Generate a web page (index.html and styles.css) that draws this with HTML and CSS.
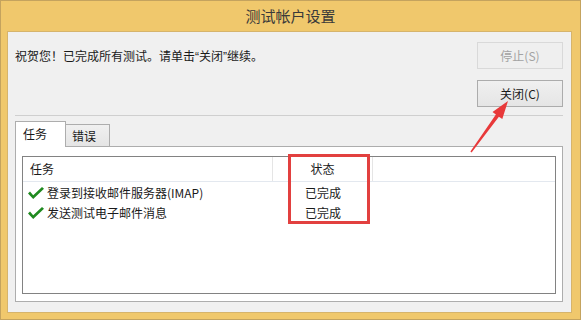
FILE: index.html
```html
<!DOCTYPE html>
<html lang="zh-CN">
<head>
  <meta charset="UTF-8" />
  <title>测试帐户设置</title>
  <link rel="stylesheet" href="styles.css">
</head>
<body>

  <div class="window">
    <div class="titlebar">测试帐户设置</div>

    <div class="client">
      <div class="top">
        <p class="msg">祝贺您！已完成所有测试。请单击<span class="q">“</span>关闭<span class="q">”</span>继续。</p>
        <div class="actions">
          <button class="btn" disabled>停止(S)</button>
          <button class="btn">关闭(C)</button>
        </div>
      </div>

      <div class="sep"></div>

      <div class="tabs">
        <div class="tab active">任务</div>
        <div class="tab">错误</div>
      </div>

      <div class="panel">
        <div class="list">
          <div class="list-head">
            <div class="col-task">任务</div>
            <div class="col-status">状态</div>
          </div>
          <div class="row">
            <div class="col-task">
              <svg class="check" viewBox="0 0 16 12" width="16" height="12"><polygon points="0,6.5 2,4.6 5.2,8.2 14,0 16,1.8 5.2,12" /></svg>
              登录到接收邮件服务器(IMAP)
            </div>
            <div class="col-status">已完成</div>
          </div>
          <div class="row">
            <div class="col-task">
              <svg class="check" viewBox="0 0 16 12" width="16" height="12"><polygon points="0,6.5 2,4.6 5.2,8.2 14,0 16,1.8 5.2,12" /></svg>
              发送测试电子邮件消息
            </div>
            <div class="col-status">已完成</div>
          </div>
        </div>
      </div>
    </div>

    <!-- annotation overlay -->
    <div class="highlight"></div>
    <svg class="arrow" viewBox="460 95 60 62" width="60" height="62">
      <polygon points="508,101 502.3,119.1 498.9,116.7 471.6,152.4 470.4,151.6 495.9,114.5 492.5,112.1" />
    </svg>
  </div>

</body>
</html>
```

FILE: styles.css
```css
body {
  margin: 0;
  font-family: "Noto Sans CJK SC", "Liberation Sans", sans-serif;
  font-size: 12px;
  color: #1a1a1a;
}

.window {
  position: relative;
  width: 581px;
  height: 320px;
  box-sizing: border-box;
  background-color: #f0c86c;
  border: 1px solid #c4a35e;
  display: flex;
  flex-direction: column;
}

.titlebar {
  height: 30px;
  line-height: 30px;
  text-align: center;
  font-size: 15px;
  color: #3a3a3a;
}

.client {
  flex: 1;
  margin: 0 8px 6px 6px;
  padding: 10px 8px 0 7px;
  border: 1px solid #d6b46c;
  background-color: #f0f0f0;
  display: flex;
  flex-direction: column;
}

.top {
  display: flex;
  justify-content: space-between;
}

.msg {
  margin: 6px 0 0;
  line-height: 16px;
}

.q {
  font-family: "Liberation Sans", sans-serif;
}

.actions {
  display: flex;
  flex-direction: column;
  gap: 11px;
}

.btn {
  width: 86px;
  height: 27px;
  padding: 0;
  font-family: inherit;
  font-size: 12px;
  color: #1a1a1a;
  border: 1px solid #acacac;
  background: linear-gradient(#f0f0f0, #e5e5e5);
}

.btn:disabled {
  color: #a3a3a3;
  border-color: #d9d9d9;
  background: #efefef;
}

.sep {
  height: 1px;
  margin-top: 8px;
  background-color: #cfcfcf;
}

.tabs {
  display: flex;
  align-items: flex-end;
  margin-top: 5px;
}

.tab {
  box-sizing: border-box;
  height: 22px;
  width: 44px;
  padding-left: 6px;
  line-height: 21px;
  border: 1px solid #adadad;
  border-left: none;
  border-bottom: none;
  background: linear-gradient(#f0f0f0, #e5e5e5);
}

.tab.active {
  position: relative;
  z-index: 1;
  height: 26px;
  width: 51px;
  padding-left: 7px;
  line-height: 23px;
  margin-bottom: -1px;
  border-left: 1px solid #adadad;
  background: #fff;
}

.panel {
  box-sizing: border-box;
  height: 156px;
  padding: 9px 6px 7px;
  border: 1px solid #adadad;
  background-color: #fff;
  display: flex;
}

.list {
  flex: 1;
  border: 1px solid #828282;
  background-color: #fff;
}

.list-head {
  display: flex;
  height: 24px;
  line-height: 24px;
  border-bottom: 1px solid #e3e8ef;
  margin-bottom: 1px;
}

.list-head .col-task {
  border-right: 1px solid #e5e5e5;
}

.list-head .col-status {
  border-right: 1px solid #e5e5e5;
}

.col-task {
  box-sizing: border-box;
  width: 250px;
  padding-left: 7px;
  display: flex;
  align-items: center;
}

.col-status {
  box-sizing: border-box;
  width: 100px;
  text-align: center;
}

.row {
  display: flex;
  height: 20px;
  line-height: 20px;
}

.row .col-task {
  padding-left: 5px;
}

.check {
  fill: #208a20;
  margin-right: 3px;
}

.highlight {
  position: absolute;
  left: 287px;
  top: 153px;
  width: 82px;
  height: 70px;
  box-sizing: border-box;
  border: 3px solid #e2403f;
}

.arrow {
  position: absolute;
  left: 459px;
  top: 94px;
  fill: #e8393a;
}
```
